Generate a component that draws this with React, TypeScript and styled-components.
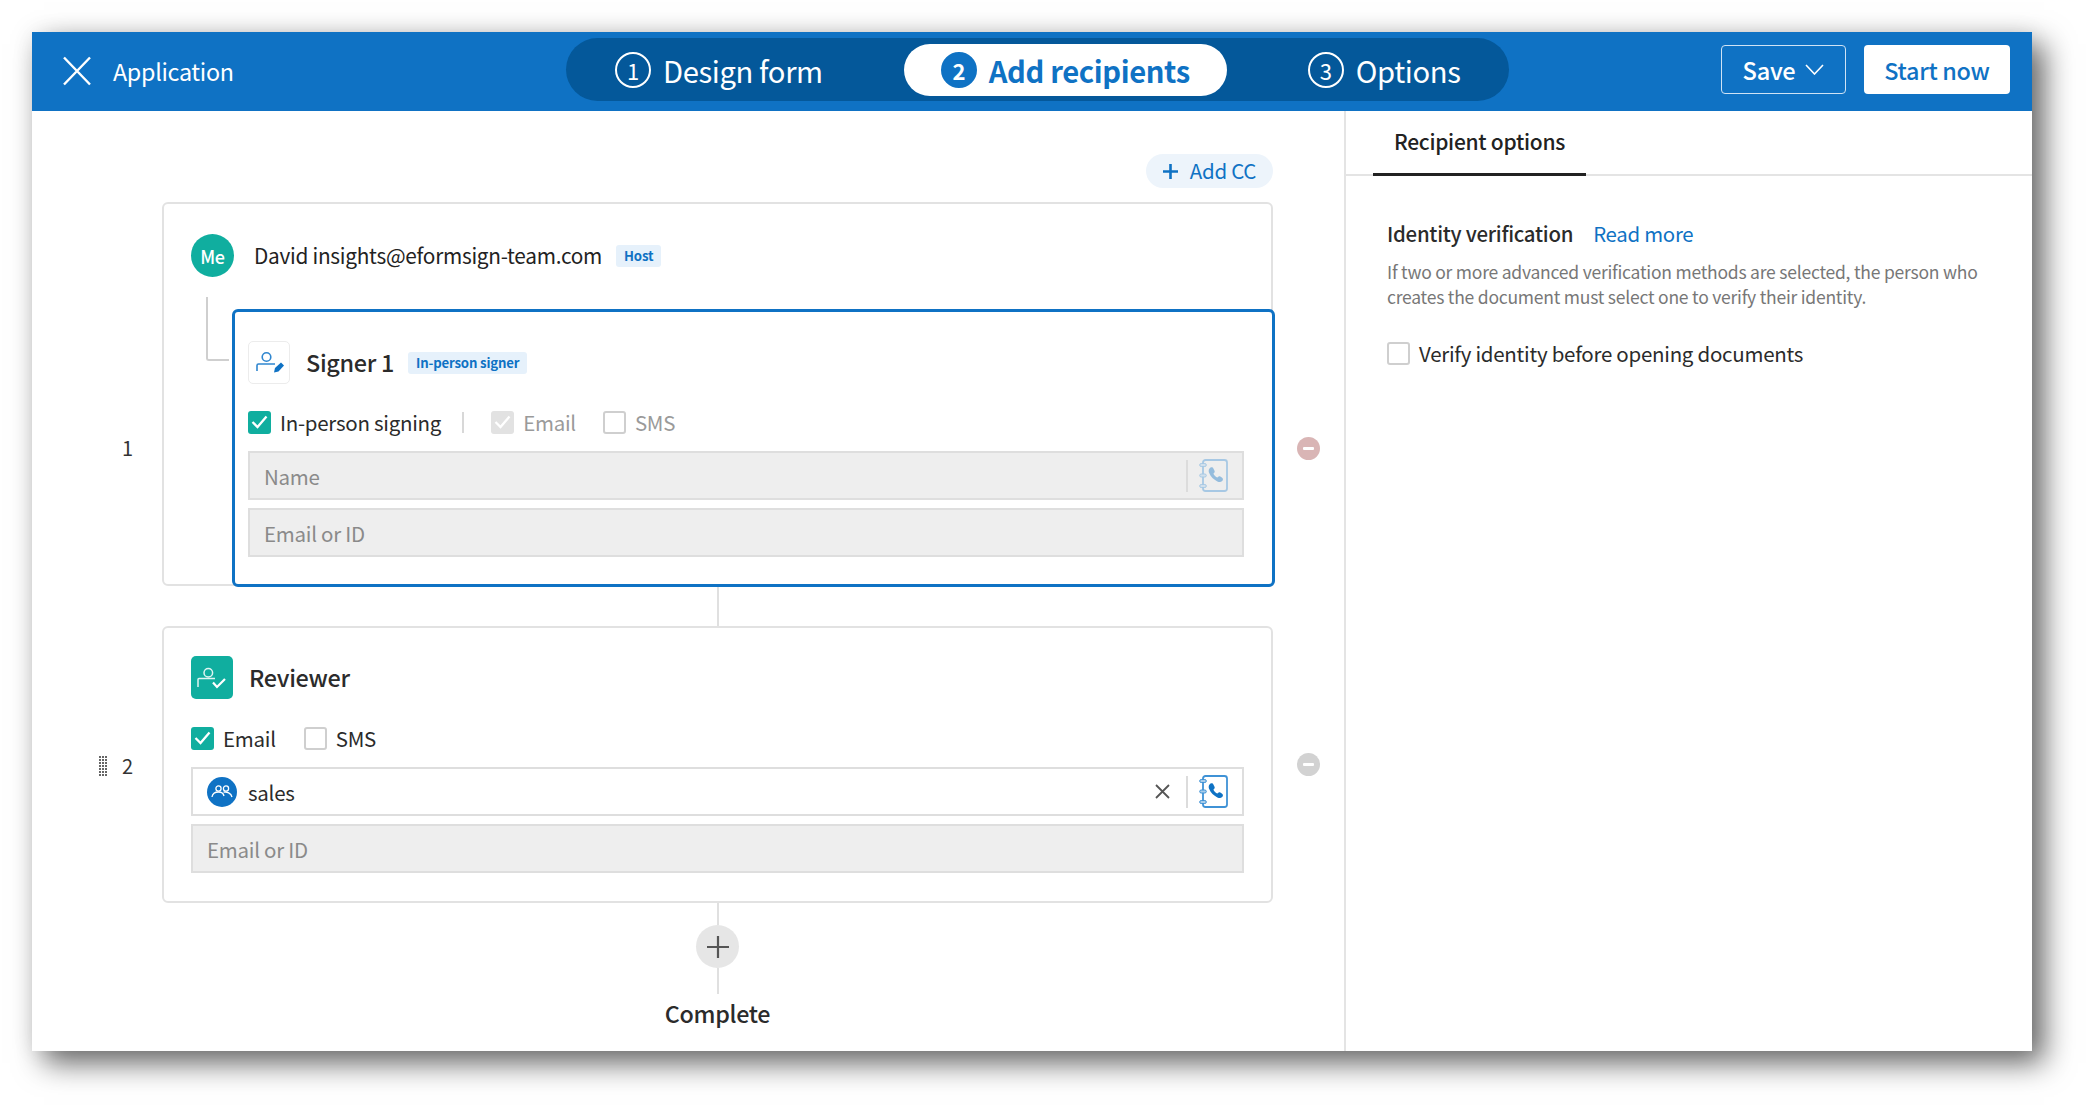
import React from "react";
import styled, { createGlobalStyle } from "styled-components";

const blue = "#0f72c4";
const teal = "#10ae9f";

const Global = createGlobalStyle`
  html, body { margin: 0; padding: 0; background: #fff; }
  body { font-family: "Noto Sans CJK KR", "Noto Sans", sans-serif; color: #2b2b2b; }
  * { box-sizing: border-box; letter-spacing: -0.013em; }
`;

const Page = styled.div`
  width: 2097px;
  height: 1116px;
  padding: 32px 0 0 32px;
  overflow: hidden;
`;
const Win = styled.div`
  width: 2000px;
  height: 1019px;
  background: #fff;
  display: flex;
  flex-direction: column;
  box-shadow: 12px 12px 28px rgba(0, 0, 0, 0.6), 0 0 24px rgba(0, 0, 0, 0.06);
`;
const Header = styled.header`
  flex: 0 0 79px;
  height: 79px;
  background: ${blue};
  display: flex;
  align-items: flex-start;
  color: #fff;
  padding-right: 22px;
`;
const Brand = styled.div`
  flex: 0 0 534px;
  height: 79px;
  display: flex;
  align-items: center;
  padding: 0 0 2px 30px;
  gap: 21px;
  font-size: 23.3px;
  line-height: 30px;
`;
const StepPill = styled.nav`
  flex: 0 0 939px;
  height: 63px;
  margin-top: 6px;
  padding: 6px 12px 0;
  border-radius: 32px;
  background: #04589a;
  display: flex;
  gap: 44px;
  align-items: flex-start;
`;
const Step = styled.div<{ $active?: boolean }>`
  height: 52px;
  padding: 0 37px;
  border-radius: 26px;
  display: flex;
  align-items: center;
  gap: 12px;
  font-size: 29.2px;
  line-height: 40px;
  white-space: nowrap;
  background: ${(p) => (p.$active ? "#fff" : "transparent")};
  color: ${(p) => (p.$active ? blue : "#fff")};
  font-weight: ${(p) => (p.$active ? 700 : 400)};
`;
const StepNum = styled.span<{ $active?: boolean }>`
  width: 36px;
  height: 36px;
  border-radius: 50%;
  border: 2px solid ${(p) => (p.$active ? blue : "#fff")};
  background: ${(p) => (p.$active ? blue : "transparent")};
  color: #fff;
  display: flex;
  align-items: center;
  justify-content: center;
  font-size: 22px;
  line-height: 1;
  font-weight: ${(p) => (p.$active ? 700 : 400)};
`;
const Actions = styled.div`
  margin-left: auto;
  margin-top: 13px;
  display: flex;
  gap: 18px;
`;
const SaveButton = styled.button`
  width: 125px;
  height: 49px;
  border: 1px solid #cfe3f5;
  border-radius: 4px;
  background: ${blue};
  color: #fff;
  font: 500 23.6px/30px "Noto Sans CJK KR", sans-serif;
  display: flex;
  align-items: center;
  justify-content: center;
  gap: 10px;
  padding: 0;
`;
const StartButton = styled.button`
  width: 146px;
  height: 49px;
  border: 0;
  border-radius: 4px;
  background: #fff;
  color: ${blue};
  font: 500 23.4px/30px "Noto Sans CJK KR", sans-serif;
  padding: 0;
`;
const Main = styled.main`
  flex: 1;
  display: flex;
  min-height: 0;
`;
const Canvas = styled.section`
  flex: 0 0 1314px;
  padding-top: 43px;
  display: flex;
  flex-direction: column;
  border-right: 2px solid #e4e4e4;
`;
const CcRow = styled.div`
  display: flex;
  justify-content: flex-end;
  padding-right: 71px;
  margin-bottom: 14px;
`;
const AddCc = styled.div`
  width: 127px;
  height: 34px;
  border-radius: 17px;
  background: #edf4fb;
  color: ${blue};
  font-size: 20.5px;
  line-height: 30px;
  display: flex;
  align-items: center;
  justify-content: center;
  gap: 12px;
  padding: 0 0 3px;
  & svg { margin-top: 3px; }
`;
const RecipientRow = styled.div`
  display: flex;
  align-items: stretch;
`;
const OrderCol = styled.div<{ $pad: number }>`
  flex: 0 0 130px;
  padding: ${(p) => p.$pad}px 27px 0 0;
  display: flex;
  align-items: center;
  justify-content: flex-end;
  gap: 15px;
`;
const OrderNum = styled.span`
  width: 13px;
  font-size: 20px;
  line-height: 26px;
  color: #333;
`;
const RemoveCol = styled.div<{ $pad: number }>`
  flex: 1;
  padding: ${(p) => p.$pad}px 0 0 24px;
  display: flex;
  align-items: center;
`;
const RemoveBtn = styled.span<{ $tone: string }>`
  width: 23px;
  height: 23px;
  border-radius: 50%;
  background: ${(p) => p.$tone};
  display: flex;
  align-items: center;
  justify-content: center;
  &::after {
    content: "";
    width: 11px;
    height: 3px;
    border-radius: 1px;
    background: #fff;
  }
`;
const Card = styled.div<{ $h: number; $top: number }>`
  flex: 0 0 1111px;
  height: ${(p) => p.$h}px;
  border: 2px solid #e2e2e2;
  border-radius: 6px;
  padding: ${(p) => p.$top}px 27px 0 27px;
  background: #fff;
`;
const HostRow = styled.div`
  display: flex;
  align-items: center;
  height: 43px;
  margin: 0 0 32px 0;
`;
const MeAvatar = styled.span`
  width: 43px;
  height: 43px;
  border-radius: 50%;
  background: ${teal};
  color: #fff;
  font-size: 18px;
  font-weight: 500;
  line-height: 1;
  display: flex;
  align-items: center;
  justify-content: center;
  margin-right: 20px;
`;
const HostText = styled.span`
  font-size: 20.8px;
  line-height: 30px;
  color: #222;
  padding-bottom: 1px;
`;
const Badge = styled.span`
  margin-left: 14px;
  height: 22px;
  padding: 0 8px;
  border-radius: 3px;
  background: #e6f1fb;
  color: ${blue};
  font-size: 13.2px;
  font-weight: 700;
  line-height: 21px;
`;
const SignerBox = styled.div`
  position: relative;
  height: 278px;
  margin: 0 -31px 0 41px;
  padding: 29px 28px 0 13px;
  border: 3px solid ${blue};
  border-radius: 6px;
  background: #fff;
  &::before {
    content: "";
    position: absolute;
    left: -29px;
    top: -15px;
    width: 21px;
    height: 62px;
    border-left: 2px solid #cfcfcf;
    border-bottom: 2px solid #cfcfcf;
    border-bottom-left-radius: 3px;
  }
`;
const TitleRow = styled.div`
  display: flex;
  align-items: center;
  height: 43px;
`;
const RoleIcon = styled.span<{ $fill?: boolean }>`
  width: 42px;
  height: 43px;
  border-radius: 5px;
  display: block;
  background: ${(p) => (p.$fill ? teal : "#fff")};
  border: ${(p) => (p.$fill ? "0" : "1px solid #ececec")};
  margin-right: 16px;
  & svg { display: block; }
`;
const RoleName = styled.span`
  font-size: 23.4px;
  line-height: 32px;
  color: #2b2b2b;
  font-weight: 500;
  padding-bottom: 1px;
`;
const CheckRow = styled.div<{ $top: number }>`
  display: flex;
  align-items: center;
  height: 24px;
  margin-top: ${(p) => p.$top}px;
  margin-bottom: 17px;
`;
const CheckItem = styled.label<{ $gap?: number }>`
  display: flex;
  align-items: center;
  gap: 9px;
  margin-right: ${(p) => p.$gap ?? 0}px;
`;
const Box = styled.span<{ $state: "on" | "off" | "muted" }>`
  width: 23px;
  height: 23px;
  border-radius: 3px;
  background: ${(p) => (p.$state === "on" ? teal : p.$state === "muted" ? "#e2e2e2" : "#fff")};
  border: ${(p) => (p.$state === "off" ? "2px solid #cfcfcf" : "0")};
  display: flex;
  align-items: center;
  justify-content: center;
`;
const CheckLabel = styled.span<{ $muted?: boolean }>`
  font-size: 20.5px;
  line-height: 28px;
  color: ${(p) => (p.$muted ? "#9a9a9a" : "#2b2b2b")};
`;
const Sep = styled.span`
  width: 2px;
  height: 21px;
  background: #d8d8d8;
  margin: 0 27px 0 21px;
`;
const Field = styled.div<{ $plain?: boolean }>`
  height: 49px;
  border: 2px solid #dedede;
  background: ${(p) => (p.$plain ? "#fff" : "#eeeeee")};
  display: flex;
  align-items: center;
  padding: 0 14px;
  font-size: 20.5px;
  line-height: 28px;
  color: ${(p) => (p.$plain ? "#2b2b2b" : "#8a8a8a")};
  & + & { margin-top: 8px; }
`;
const FieldText = styled.span`
  flex: 1;
`;
const FieldSep = styled.span`
  width: 2px;
  height: 32px;
  margin: 0 11px 0 16px;
  background: #dcdcdc;
`;
const GroupAvatar = styled.span`
  width: 30px;
  height: 30px;
  border-radius: 50%;
  background: ${blue};
  margin-right: 11px;
  display: flex;
  align-items: center;
  justify-content: center;
`;
const ConnectorLine = styled.div<{ $h: number }>`
  width: 2px;
  height: ${(p) => p.$h}px;
  background: #e0e0e0;
  flex: none;
`;
const Connector = styled.div`
  margin-left: 685px;
  width: 2px;
`;
const Tail = styled.div`
  width: 1111px;
  margin-left: 130px;
  display: flex;
  flex-direction: column;
  align-items: center;
`;
const AddStep = styled.div`
  width: 43px;
  height: 43px;
  border-radius: 50%;
  background: #e6e6e6;
  display: flex;
  align-items: center;
  justify-content: center;
  flex: none;
`;
const CompleteLabel = styled.div`
  font-size: 23.3px;
  font-weight: 500;
  line-height: 32px;
  margin-top: 3px;
  color: #2b2b2b;
`;
const Side = styled.aside`
  flex: 1;
`;
const TabBar = styled.div`
  height: 65px;
  border-bottom: 2px solid #e4e4e4;
  padding-left: 27px;
`;
const Tab = styled.div`
  width: 213px;
  height: 65px;
  border-bottom: 3px solid #222;
  text-align: center;
  font-size: 21px;
  font-weight: 500;
  line-height: 30px;
  padding-top: 15px;
  color: #222;
`;
const SideBody = styled.div`
  padding: 42px 0 0 41px;
`;
const OptionHead = styled.div`
  display: flex;
  align-items: baseline;
  gap: 20px;
  line-height: 30px;
`;
const OptionTitle = styled.span`
  font-size: 20.4px;
  font-weight: 500;
  color: #2b2b2b;
`;
const ReadMore = styled.a`
  font-size: 20.4px;
  color: ${blue};
`;
const Desc = styled.p`
  margin: 11px 0 0;
  font-size: 17.5px;
  line-height: 25px;
  color: #777;
`;
const VerifyRow = styled.div`
  margin-top: 32px;
  display: flex;
  align-items: center;
  height: 24px;
`;

const Check = ({ color = "#fff" }: { color?: string }) => (
  <svg width="17" height="14" viewBox="0 0 17 14">
    <path d="M1.5 7 L6.5 12 L15.5 1.5" fill="none" stroke={color} strokeWidth="2.3" />
  </svg>
);

const Phonebook = ({ muted }: { muted?: boolean }) => (
  <svg width="29" height="33" viewBox="0 0 29 33" style={{ opacity: muted ? 0.4 : 1 }}>
    <rect x="4" y="1" width="24" height="31" rx="2.5" fill="none" stroke="#3f92d6" strokeWidth="1.8" />
    <g fill="#a9cdea" stroke="#3f92d6" strokeWidth="1">
      <rect x="0.7" y="4.5" width="6.6" height="3" rx="1.5" />
      <rect x="0.7" y="15" width="6.6" height="3" rx="1.5" />
      <rect x="0.7" y="25.5" width="6.6" height="3" rx="1.5" />
    </g>
    <path
      d="M10.5 9.5c1.3-1.7 3.2-1.5 4 .2l1 2.1c.4.9.2 1.6-.5 2.3l-.6.6c.9 1.8 2.2 3 4 3.9l.6-.6c.7-.7 1.4-.9 2.3-.4l1.5.9c1.4.8 1.6 2.5.3 3.6-1.1 1-2.8 1.2-4.7.3-3.8-1.7-6.6-4.5-8.2-8.3-.7-1.6-.7-3.3.3-4.6z"
      fill={blue}
    />
  </svg>
);

const DragHandle = () => (
  <svg width="8" height="20" viewBox="0 0 8 20" fill="#666">
    {[0, 1, 2, 3, 4, 5, 6].map((r) => (
      <g key={r}>
        <rect x="0" y={r * 3} width="2" height="2" />
        <rect x="3" y={r * 3} width="2" height="2" />
        <rect x="6" y={r * 3} width="2" height="2" />
      </g>
    ))}
  </svg>
);

const App = () => (
  <Page>
    <Global />
    <Win>
      <Header>
        <Brand>
          <svg width="30" height="30" viewBox="0 0 30 30">
            <path d="M2 1.5 L28 28.5 M28 1.5 L2 28.5" stroke="#fff" strokeWidth="2.4" fill="none" />
          </svg>
          <span>Application</span>
        </Brand>
        <StepPill>
          <Step>
            <StepNum>1</StepNum>
            <span>Design form</span>
          </Step>
          <Step $active>
            <StepNum $active>2</StepNum>
            <span>Add recipients</span>
          </Step>
          <Step>
            <StepNum>3</StepNum>
            <span>Options</span>
          </Step>
        </StepPill>
        <Actions>
          <SaveButton>
            <span>Save</span>
            <svg width="19" height="11" viewBox="0 0 19 11">
              <path d="M1 1 L9.5 10 L18 1" fill="none" stroke="#fff" strokeWidth="1.6" />
            </svg>
          </SaveButton>
          <StartButton>Start now</StartButton>
        </Actions>
      </Header>
      <Main>
        <Canvas>
          <CcRow>
            <AddCc>
              <svg width="15" height="15" viewBox="0 0 15 15">
                <path d="M7.5 0 V15 M0 7.5 H15" stroke={blue} strokeWidth="2.6" />
              </svg>
              <span>Add CC</span>
            </AddCc>
          </CcRow>
          <RecipientRow>
            <OrderCol $pad={108}>
              <OrderNum>1</OrderNum>
            </OrderCol>
            <Card $h={384} $top={30}>
              <HostRow>
                <MeAvatar>Me</MeAvatar>
                <HostText>David insights@eformsign-team.com</HostText>
                <Badge>Host</Badge>
              </HostRow>
              <SignerBox>
                <TitleRow>
                  <RoleIcon>
                    <svg width="40" height="41" viewBox="0 0 40 41">
                      <circle cx="17.5" cy="15" r="4.3" fill="none" stroke="#2f86cf" strokeWidth="1.6" />
                      <path d="M8 29 V23.5 Q8 22 9.5 22 H26" fill="none" stroke="#2f86cf" strokeWidth="1.6" />
                      <path d="M25 30.5 L26 26 L32 20.5 L35 23.5 L29.5 29.5 Z" fill={blue} />
                    </svg>
                  </RoleIcon>
                  <RoleName>Signer 1</RoleName>
                  <Badge>In-person signer</Badge>
                </TitleRow>
                <CheckRow $top={26}>
                  <CheckItem>
                    <Box $state="on"><Check /></Box>
                    <CheckLabel>In-person signing</CheckLabel>
                  </CheckItem>
                  <Sep />
                  <CheckItem $gap={27}>
                    <Box $state="muted"><Check /></Box>
                    <CheckLabel $muted>Email</CheckLabel>
                  </CheckItem>
                  <CheckItem>
                    <Box $state="off" />
                    <CheckLabel $muted>SMS</CheckLabel>
                  </CheckItem>
                </CheckRow>
                <Field>
                  <FieldText>Name</FieldText>
                  <FieldSep />
                  <Phonebook muted />
                </Field>
                <Field>
                  <FieldText>Email or ID</FieldText>
                </Field>
              </SignerBox>
            </Card>
            <RemoveCol $pad={109}>
              <RemoveBtn $tone="#d9b5b5" />
            </RemoveCol>
          </RecipientRow>
          <Connector>
            <ConnectorLine $h={40} />
          </Connector>
          <RecipientRow>
            <OrderCol $pad={3}>
              <DragHandle />
              <OrderNum>2</OrderNum>
            </OrderCol>
            <Card $h={277} $top={28}>
              <TitleRow>
                <RoleIcon $fill>
                  <svg width="42" height="43" viewBox="0 0 42 43">
                    <circle cx="17.3" cy="16.7" r="4.3" fill="none" stroke="#dff5f2" strokeWidth="1.5" />
                    <path d="M7 31 V23.5 Q7 22.5 8 22.5 H24" fill="none" stroke="#dff5f2" strokeWidth="1.5" />
                    <path d="M22 26.5 L26 31 L34 23" fill="none" stroke="#fff" strokeWidth="2.2" />
                  </svg>
                </RoleIcon>
                <RoleName>Reviewer</RoleName>
              </TitleRow>
              <CheckRow $top={27}>
                <CheckItem $gap={28}>
                  <Box $state="on"><Check /></Box>
                  <CheckLabel>Email</CheckLabel>
                </CheckItem>
                <CheckItem>
                  <Box $state="off" />
                  <CheckLabel>SMS</CheckLabel>
                </CheckItem>
              </CheckRow>
              <Field $plain>
                <GroupAvatar>
                  <svg width="22" height="14" viewBox="0 0 22 14">
                    <g fill="none" stroke="#fff" strokeWidth="1.3">
                      <circle cx="7.5" cy="3.5" r="2.6" />
                      <circle cx="15" cy="3.5" r="2.6" />
                      <path d="M1 12 C1.5 8.5 4 7 7.5 7 C11 7 12.5 8.5 13 11" />
                      <path d="M12.5 7.2 C16 6.5 20 8 21 12" />
                    </g>
                  </svg>
                </GroupAvatar>
                <FieldText>sales</FieldText>
                <svg width="15" height="15" viewBox="0 0 15 15">
                  <path d="M1 1 L14 14 M14 1 L1 14" stroke="#555" strokeWidth="1.8" />
                </svg>
                <FieldSep />
                <Phonebook />
              </Field>
              <Field>
                <FieldText>Email or ID</FieldText>
              </Field>
            </Card>
            <RemoveCol $pad={0}>
              <RemoveBtn $tone="#d2d2d2" />
            </RemoveCol>
          </RecipientRow>
          <Tail>
            <ConnectorLine $h={22} />
            <AddStep>
              <svg width="22" height="22" viewBox="0 0 22 22">
                <path d="M11 0 V22 M0 11 H22" stroke="#555" strokeWidth="2.2" />
              </svg>
            </AddStep>
            <ConnectorLine $h={26} />
            <CompleteLabel>Complete</CompleteLabel>
          </Tail>
        </Canvas>
        <Side>
          <TabBar>
            <Tab>Recipient options</Tab>
          </TabBar>
          <SideBody>
            <OptionHead>
              <OptionTitle>Identity verification</OptionTitle>
              <ReadMore>Read more</ReadMore>
            </OptionHead>
            <Desc>
              If two or more advanced verification methods are selected, the person who
              <br />
              creates the document must select one to verify their identity.
            </Desc>
            <VerifyRow>
              <CheckItem>
                <Box $state="off" />
                <CheckLabel>Verify identity before opening documents</CheckLabel>
              </CheckItem>
            </VerifyRow>
          </SideBody>
        </Side>
      </Main>
    </Win>
  </Page>
);

export default App;
